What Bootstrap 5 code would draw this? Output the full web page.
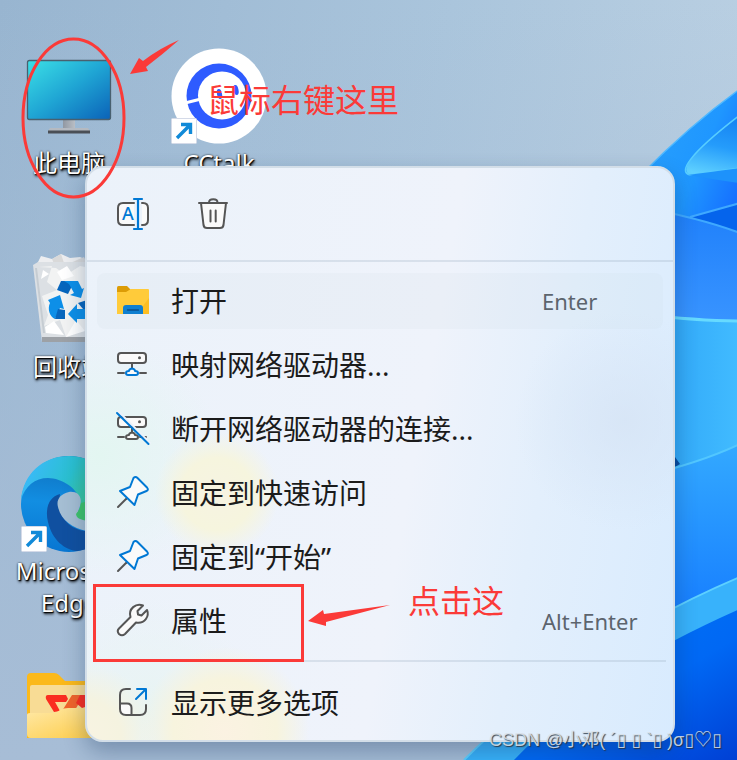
<!DOCTYPE html>
<html lang="zh-CN">
<head>
<meta charset="utf-8">
<meta name="viewport" content="width=device-width, initial-scale=1">
<title>此电脑</title>
<link href="https://cdn.jsdelivr.net/npm/bootstrap@5.3.0/dist/css/bootstrap.min.css" rel="stylesheet">
<style>
  body { font-family: "Noto Sans", "Noto Sans CJK SC", sans-serif; }
  .desktop { min-height: 100vh; background: #a3bdd4; }
  .wallpaper { inset: 0; }
  .desk-grid { display: grid; grid-template-columns: 138px 162px; grid-auto-rows: 204px; padding-top: 48px; height: 760px; overflow: hidden; }
  .desk-item { border: 0; background: none; padding: 0; color: #fff; font-size: 24px; line-height: 32px; text-shadow: 1px 1px 1px #000, 1px 2px 3px #000, 0 0 2px rgba(0,0,0,.8); }
  .desk-item svg { width: 96px; height: 96px; margin-bottom: 3px; }
  .desk-item.r2 { grid-row: 2; } .desk-item.r3 { grid-row: 3; } .desk-item.r4 { grid-row: 4; }
  .ctx-menu {
    left: 85px; right: 62px; top: 166px; border: 2px solid #d3dee8; border-radius: 18px;
    background-image:
      radial-gradient(circle at 132px 328px, #f6f3e2 0, #f6f5de 36px, rgba(246,245,222,0) 62px),
      radial-gradient(circle at 140px 565px, #fbf2e2 0, #f7f4de 52px, rgba(247,245,221,0) 84px),
      radial-gradient(circle at 0 570px, #f8f3e2 0, #f5f3e0 36px, rgba(247,245,221,0) 72px),
      radial-gradient(circle at 15px 290px, #e3f6f1 0, rgba(226,245,241,0) 120px),
      radial-gradient(circle at 60px 540px, #e8f4f3 0, rgba(226,245,241,0) 110px),
      radial-gradient(circle at 540px 255px, rgba(214,228,245,.8) 0, rgba(216,231,248,0) 110px),
      linear-gradient(100deg, #ebf2fa 0, #eff3fb 55%, #e3effc 74%, #d8ebfe 100%);
    background-origin: border-box;
    box-shadow: 0 10px 22px rgba(20,50,90,.32);
  }
  .ctx-tools { height: 92px; padding: 2px 30px 0; gap: 47px; }
  .ctx-rule { height: 2px; background: rgba(150,170,190,.26); }
  .ctx-rule.lower { margin: 7px 7px 9px; }
  .ctx-list { padding: 7px 10px 0; }
  .ctx-last { padding: 0 10px 5px; }
  .ctx-row { height: 56px; margin: 4px 0; padding: 0 0 0 20px; gap: 20px; border: 0; border-radius: 8px; background: none; color: #1b1b1b; font-size: 28px; line-height: 40px; text-align: left; }
  .ctx-row.active-row { background: rgba(200,212,222,.12); }
  .ctx-row kbd { width: 121px; padding: 0; background: none; color: #5c646d; font: 22px/32px "Noto Sans", sans-serif; }
  .tool-btn { border: 0; padding: 0; background: none; line-height: 0; }
  .ic { width: 34px; height: 34px; flex: none; fill: none; stroke: #555; stroke-width: 2; stroke-linejoin: round; stroke-linecap: round; overflow: visible; }
  .ic .bl { stroke: #0078d4; }
  .ic .w { fill: #fafafa; }
  .note-layer { inset: 0; pointer-events: none; }
  .note-text { color: #fb3a38; font-size: 32px; line-height: 40px; }
  .note-a { left: 207px; top: 80px; }
  .note-b { left: 408px; top: 581px; }
  .credit { right: 15px; top: 727px; font: 18px/26px "Liberation Sans", "Noto Sans CJK SC", "DejaVu Sans", sans-serif; color: rgba(222,228,234,.85); text-shadow: 1px 1px 1px rgba(40,50,60,.9); }
</style>
</head>
<body>
<main class="desktop position-relative overflow-hidden">
  <svg class="wallpaper position-absolute w-100 h-100" viewBox="0 0 737 760" preserveAspectRatio="xMaxYMin slice" aria-hidden="true">
    <defs>
      <linearGradient id="sky" x1="0" y1="0" x2="1" y2=".15"><stop offset="0" stop-color="#98b5d0"/><stop offset=".6" stop-color="#aac5dc"/><stop offset="1" stop-color="#b9cfe2"/></linearGradient>
      <linearGradient id="low" x1="0" y1="0" x2="0" y2="1"><stop offset="0" stop-color="#a6bdd6" stop-opacity="0"/><stop offset="1" stop-color="#a7bdd6"/></linearGradient>
      <linearGradient id="p1" x1="0" y1="0" x2="1" y2="1"><stop offset="0" stop-color="#2aa2fb"/><stop offset=".45" stop-color="#1f97ff"/><stop offset=".7" stop-color="#1672ff"/></linearGradient>
      <linearGradient id="p2" x1=".6" y1="0" x2=".4" y2="1"><stop offset="0" stop-color="#1583f2"/><stop offset=".5" stop-color="#259cfb"/><stop offset="1" stop-color="#5ed0ff"/></linearGradient>
      <linearGradient id="p3" x1="0" y1="0" x2="0" y2="1"><stop offset="0" stop-color="#1f80fb"/><stop offset="1" stop-color="#3a95ff"/></linearGradient>
      <linearGradient id="p4" x1="0" y1="0" x2="1" y2="0"><stop offset="0" stop-color="#2aa0f6"/><stop offset="1" stop-color="#42bcff"/></linearGradient>
      <linearGradient id="p5" x1="0" y1="0" x2="0" y2="1"><stop offset="0" stop-color="#33a9ff"/><stop offset="1" stop-color="#167dff"/></linearGradient>
      <linearGradient id="p6" x1="0" y1="0" x2="1" y2="1"><stop offset="0" stop-color="#0078f5"/><stop offset=".6" stop-color="#0068f4"/><stop offset="1" stop-color="#003fd4"/></linearGradient>
    </defs>
    <rect width="737" height="760" fill="url(#sky)"/>
    <rect width="737" height="760" fill="url(#low)"/>
    <path d="M640 176Q690 125 740 89V330H640Z" fill="url(#p1)"/>
    <path d="M640 176Q690 125 740 89" fill="none" stroke="#4fb9ff" stroke-width="1.500"/>
    <path d="M740 168Q705 173 690 175C680 170 688 155 740 115Z" fill="url(#p2)"/>
    <path d="M740 115C688 155 678 172 690 175Q705 173 740 168" fill="none" stroke="#57cdff" stroke-width="1.500"/>
    <path d="M688 175Q710 172 740 168V183Q715 180 688 175Z" fill="#1d92fb"/>
    <path d="M640 207Q700 218 740 233V330H640Z" fill="url(#p3)"/>
    <path d="M690 217L740 202V233Z" fill="#0564ec"/>
    <path d="M640 207Q700 218 740 233M690 217L740 203" fill="none" stroke="#3fa9ff" stroke-width="2"/>
    <path d="M640 314Q700 321 740 321V480H640Z" fill="url(#p4)"/>
    <path d="M640 314Q700 321 740 321" fill="none" stroke="#66daff" stroke-width="3"/>
    <path d="M670 450L680 464L670 470Z" fill="#064a9c"/>
    <path d="M640 477Q700 463 740 444V620H640Z" fill="url(#p5)"/>
    <path d="M640 477Q700 463 740 444" fill="none" stroke="#52c7ff" stroke-width="2"/>
    <path d="M480 760L530 728L640 656Q700 620 740 604V760Z" fill="url(#p6)"/>
    <path d="M464 760Q500 724 560 676Q650 615 740 577V609Q670 640 620 672Q560 712 514 760Z" fill="#38b2fb"/>
    <path d="M464 760Q500 724 560 676Q650 615 740 577" fill="none" stroke="#5dd0ff" stroke-width="2"/>
  </svg>

  <div class="desk-grid position-relative">
    <button type="button" class="desk-item d-flex flex-column align-items-center">
      <svg viewBox="21 48 96 96" aria-hidden="true">
        <defs><linearGradient id="scr" x1="0" y1="0" x2="1" y2="1"><stop offset="0" stop-color="#3be0e6"/><stop offset=".5" stop-color="#1fa5d4"/><stop offset="1" stop-color="#0b62b8"/></linearGradient>
        <linearGradient id="std" x1="0" y1="0" x2="1" y2="0"><stop offset="0" stop-color="#9198a2"/><stop offset="1" stop-color="#b9bec5"/></linearGradient></defs>
        <path d="M63 119H75V128H63Z" fill="url(#std)"/><path d="M50 128H88L90 131H48Z" fill="#b5bac1"/><path d="M48 130.500H90V133.500H48Z" fill="#4a4f56"/>
        <rect x="27.500" y="60.500" width="83" height="59" rx="2" fill="url(#scr)" stroke="#49606f" stroke-width="1.300"/>
      </svg>
      <span>此电脑</span>
    </button>
    <button type="button" class="desk-item d-flex flex-column align-items-center">
      <svg viewBox="171 48 96 96" aria-hidden="true">
        <circle cx="219" cy="96" r="47.500" fill="#fff"/>
        <circle cx="219" cy="96" r="32.500" fill="#2e5bff"/><circle cx="222" cy="95.500" r="24" fill="#fff"/>
        <path d="M185 103L203 98.500" stroke="#fff" stroke-width="3"/>
        <ellipse cx="219.500" cy="94" rx="2.500" ry="5" fill="#2e5bff" transform="rotate(-12 219.500 94)"/><ellipse cx="236" cy="90" rx="2.500" ry="5" fill="#2e5bff" transform="rotate(-12 236 90)"/>
        <rect x="171.500" y="118.500" width="25" height="25" rx="1" fill="#fff" stroke="#d4dae8"/><path d="M177 138L190 125M181 124.500H190.500V134" fill="none" stroke="#118ad8" stroke-width="3.400"/>
      </svg>
      <span>CCtalk</span>
    </button>
    <button type="button" class="desk-item r2 d-flex flex-column align-items-center">
      <svg viewBox="21 252 96 96" aria-hidden="true">
        <path d="M36 266L41 256L52 259L61 254L70 258L80 257L92 262L104 266Z" fill="#edeef0"/>
        <path d="M52 259L61 254L65 266H55ZM68 264L84 257L88 266Z" fill="#d9d9d9"/>
        <path d="M33 265L38 262H104L107 265L98 342H42Z" fill="#dce0e4"/>
        <path d="M42 337H98V342H42Z" fill="#9da1a6"/>
        <path d="M39 267L52 266L47 282L57 290L42 296L48 315L44 326L60 320L66 337L84 330L96 336L101 270L80 266L66 275L56 268Z" fill="#f2f3f3"/>
        <path d="M43 270L49 274L41 279ZM45 327L54 321L64 335L46 333ZM66 337L76 320L85 331ZM57 272L67 266L74 276L62 280Z" fill="#fff"/>
        <path d="M36 268L44 333" stroke="#c6ccd2" stroke-width="2"/>
        <path d="M61 281H69L73 284L68 294L57 290Z" fill="#0766bd"/><path d="M64 281H78L82 289L84 288L81 298L70 295L74 293L69 284Z" fill="#0d8fe8"/>
        <path d="M60 295L64 309L60 308L55 319C50 317 47 309 50 303L48 300Z" fill="#0d8fe8"/><path d="M58 309L65 310V319H55Z" fill="#0766bd"/>
        <path d="M68 314L77 304V309H92V319H77V323Z" fill="#0d8fe8"/><path d="M78 303L90 299V309H83Z" fill="#0766bd"/>
      </svg>
      <span>回收站</span>
    </button>
    <button type="button" class="desk-item r3 d-flex flex-column align-items-center">
      <svg viewBox="21 456 96 96" aria-hidden="true">
        <defs><linearGradient id="e1" x1="0" y1=".2" x2="1" y2=".5"><stop offset="0" stop-color="#3cb9ff"/><stop offset=".5" stop-color="#2ac0cf"/><stop offset="1" stop-color="#48ce62"/></linearGradient>
        <linearGradient id="e2" x1=".5" y1="0" x2=".4" y2="1"><stop offset="0" stop-color="#0e6dba"/><stop offset=".5" stop-color="#128ee2"/><stop offset="1" stop-color="#0876d2"/></linearGradient></defs>
        <circle cx="69" cy="504" r="48" fill="url(#e2)"/>
        <path d="M21 500C23 474 43 456 69 456C97 456 117 478 117 500C117 520 93 526 79 518C75 515 79 511 80 506C82 490 62 478 48 478C35 478 25 486 21 500Z" fill="url(#e1)"/>
        <path d="M60 494C48 497 45 510 48 522C52 540 65 550 77 551C96 549 108 538 113 524C90 540 54 530 60 494Z" fill="#1050a0"/>
        <path d="M80 506C83 496 77 491 69 492C60 494 56 500 58 507C61 520 72 528 87 531C103 532 114 524 117 512C107 523 90 522 79 518C75 515 79 511 80 506Z" fill="#a5bed3"/>
        <path d="M76 514Q80 510 81 503L92 500V521Q83 521 78 518Q76 516 76 514Z" fill="#3fc46a"/>
        <rect x="21.500" y="526.500" width="25" height="25" rx="1" fill="#fff" stroke="#d4dae8"/><path d="M27 546L40 533M31 532.500H40.500V542" fill="none" stroke="#118ad8" stroke-width="3.400"/>
      </svg>
      <span>Microsoft<br>Edge</span>
    </button>
    <button type="button" class="desk-item r4 d-flex flex-column align-items-center" aria-label="WPS">
      <svg viewBox="21 660 96 96" aria-hidden="true">
        <defs><linearGradient id="fo" x1="0" y1="0" x2="1" y2="1"><stop offset="0" stop-color="#ffe9a8"/><stop offset="1" stop-color="#fdc93e"/></linearGradient></defs>
        <path d="M27 677Q27 673 31 673H54Q57 673 59 675L65 681H111V738H27Z" fill="#fbb91b"/>
        <rect x="30" y="685" width="80" height="40" rx="2" fill="#f8dc95"/>
        <path d="M48 695H66L68 699L66 702H55L60 711L54 712L46 699Q45 695 48 695Z" fill="#fa2d20"/>
        <path d="M72 695H84L75 710L62 711Z" fill="#f1632a"/><path d="M80 695H104V701L82 708L76 703Z" fill="#fa2d20"/>
        <path d="M27 715Q27 713 30 713H53Q57 713 60 710Q64 708 68 708H111V738H31Q27 738 27 734Z" fill="url(#fo)"/>
      </svg>
    </button>
  </div>

  <nav class="ctx-menu position-absolute" aria-label="快捷菜单">
    <div class="ctx-tools d-flex align-items-center">
      <button type="button" class="tool-btn" aria-label="重命名">
        <svg class="ic" viewBox="0 0 34 34"><path class="w" d="M17 5H6Q1 5 1 10V22Q1 27 6 27H17M25 5H26Q31 5 31 10V22Q31 27 26 27H25"/><path class="bl" d="M21 1V31M17 1H25M17 31H25" stroke-width="2.200"/><text x="11" y="22" text-anchor="middle" font-size="18" font-family="Noto Sans, sans-serif" font-weight="500" fill="#0078d4" stroke="none">A</text></svg>
      </button>
      <button type="button" class="tool-btn" aria-label="删除">
        <svg class="ic" viewBox="0 0 34 34"><path class="w" d="M3 5L5.500 27Q6 30 9 30H22Q25 30 25.500 27L28 5"/><path d="M1 5H29M11 4.500C11 0 19.500 0 19.500 4.500M12.500 12.500V23.500M17.700 12.500V23.500"/></svg>
      </button>
    </div>
    <div class="ctx-rule"></div>
    <div class="ctx-list d-flex flex-column">
      <button type="button" class="ctx-row active-row d-flex align-items-center">
        <svg class="ic" viewBox="0 0 34 34"><g stroke="none"><path d="M0 3.500Q0 2 1.500 2H10L14 6V9H0Z" fill="#dc9c06"/><path d="M0 8H9L14 5H31Q32 5 32 6V30H0Z" fill="#ffcb3a"/><path d="M20 30L32 14V30Z" fill="#fdbe22"/><path d="M6 30V24Q6 21 9 21H23Q26 21 26 24V30Z" fill="#0f7fd0"/></g><path d="M10.500 26H21.500" stroke="#0a4f8c" stroke-width="1.300"/></svg>
        <span class="flex-grow-1">打开</span><kbd>Enter</kbd>
      </button>
      <button type="button" class="ctx-row d-flex align-items-center">
        <svg class="ic" viewBox="0 0 34 34"><rect class="w" x="1" y="5" width="28" height="10" rx="3"/><circle cx="22.500" cy="9.700" r="1.500" fill="#555" stroke="none"/><path d="M15 15V20M1 25H7M23 25H29"/><path class="bl w" d="M11 27Q9 27 9 25Q9 23 12 23Q12 21 15 20.500Q18 21 18 23Q21 23 21 25Q21 27 19 27Z"/></svg>
        <span class="flex-grow-1">映射网络驱动器...</span>
      </button>
      <button type="button" class="ctx-row d-flex align-items-center">
        <svg class="ic" viewBox="0 0 34 34"><rect class="w" x="1" y="5" width="28" height="10" rx="3"/><circle cx="22.500" cy="9.700" r="1.500" fill="#555" stroke="none"/><path d="M15 15V20M1 25H7M23 25H29"/><path class="w" d="M11 27Q9 27 9 25Q9 23 12 23Q12 21 15 20.500Q18 21 18 23Q21 23 21 25Q21 27 19 27Z"/><path d="M1 -1L33 31" stroke="#edf2fa"/><path class="bl" d="M0 1L31.500 32"/></svg>
        <span class="flex-grow-1">断开网络驱动器的连接...</span>
      </button>
      <button type="button" class="ctx-row d-flex align-items-center">
        <svg class="ic" viewBox="0 0 34 34"><path d="M1 31L9.500 22.500"/><path class="bl w" d="M16.500 2Q18.500 0 20.500 2L30 11.500Q32 14 29.500 15L21 18.500L17.500 29L3 15L13 11Z"/></svg>
        <span class="flex-grow-1">固定到快速访问</span>
      </button>
      <button type="button" class="ctx-row d-flex align-items-center">
        <svg class="ic" viewBox="0 0 34 34"><path d="M1 31L9.500 22.500"/><path class="bl w" d="M16.500 2Q18.500 0 20.500 2L30 11.500Q32 14 29.500 15L21 18.500L17.500 29L3 15L13 11Z"/></svg>
        <span class="flex-grow-1">固定到“开始”</span>
      </button>
      <button type="button" class="ctx-row d-flex align-items-center">
        <svg class="ic" viewBox="0 0 34 34"><path class="w" d="M26 1.500L20.500 7L21 10.500L24.500 11.500L30 6C32.500 12 28 20 19 18.500L8 30Q5 32.500 2 30Q-.5 27 2 24.500L13.500 13C11 5 19 -1.500 26 1.500Z"/></svg>
        <span class="flex-grow-1">属性</span><kbd>Alt+Enter</kbd>
      </button>
    </div>
    <div class="ctx-rule lower"></div>
    <div class="ctx-last d-flex flex-column">
      <button type="button" class="ctx-row d-flex align-items-center">
        <svg class="ic" viewBox="0 0 34 34"><path class="w" stroke="none" d="M3 17H10Q14 17 14 21V29H8Q3 29 3 24Z"/><path d="M13 3H9Q3 3 3 9V23Q3 29 9 29H23Q29 29 29 23V19M3 17.500H10Q14.500 17.500 14.500 22V29"/><path class="bl" d="M19 13L29 3M20 3H29V13"/></svg>
        <span class="flex-grow-1">显示更多选项</span>
      </button>
    </div>
  </nav>

  <div class="note-layer position-absolute">
    <svg class="position-absolute" width="737" height="760" viewBox="0 0 737 760" fill="none" stroke="#fb3a38" stroke-width="3" aria-hidden="true">
      <ellipse cx="73.500" cy="118" rx="50.500" ry="79"/>
      <rect x="94.500" y="585.500" width="208" height="75"/>
      <path stroke="none" fill="#fb3a38" d="M130 74L139 58L143 61Q160 48 179 40Q163 54 146 67L148 71ZM308 621L323 610L324 614L390 605L326 622V626Z"/>
    </svg>
    <span class="note-text note-a position-absolute text-nowrap">鼠标右键这里</span>
    <span class="note-text note-b position-absolute text-nowrap">点击这</span>
    <span class="credit position-absolute text-nowrap">CSDN @小邓( ´▯ ▯ `▯ )σ▯♡▯</span>
  </div>
</main>
<script src="https://cdn.jsdelivr.net/npm/bootstrap@5.3.0/dist/js/bootstrap.bundle.min.js"></script>
</body>
</html>
